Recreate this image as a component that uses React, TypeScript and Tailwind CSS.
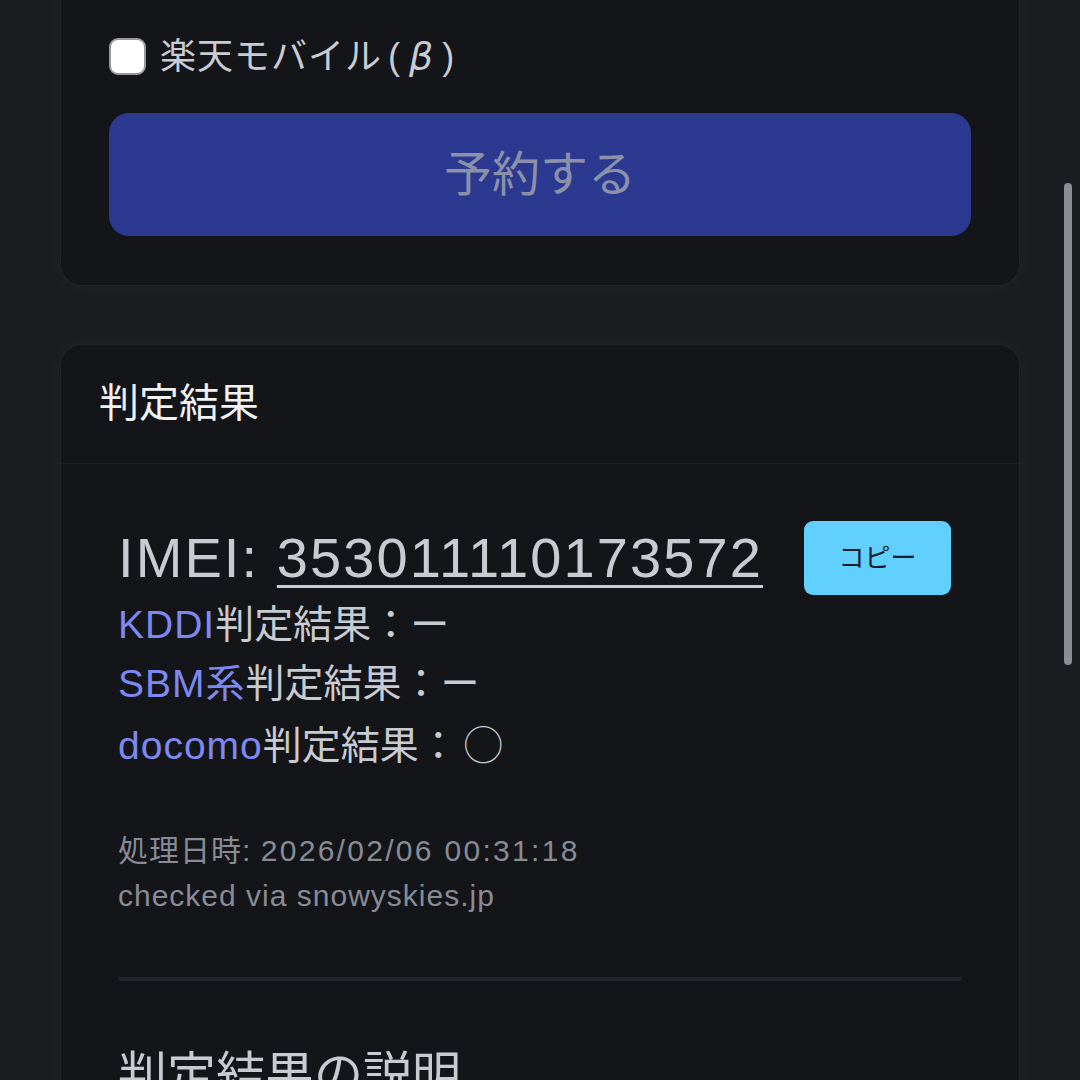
import React from "react";

const jp = { fontFamily: '"Liberation Sans", "Noto Sans CJK JP", sans-serif' };

export default function App() {
  return (
    <div className="relative w-[1080px] h-[1080px] overflow-hidden bg-[#1b1c20]" style={jp}>
      <div className="flex flex-col gap-[58px] px-[60px] -mt-[40px]">
        {/* Card 1 */}
        <div className="rounded-[22px] bg-[#141519] border border-[#222428] shadow-[0_0_24px_rgba(255,255,255,0.04)] px-[48px] pt-[76px] pb-[49px]">
          <label className="flex items-center gap-[14px] h-[38px]">
            <span className="w-[37px] h-[37px] rounded-[9px] bg-white border-2 border-[#9a9a9a] shrink-0" />
            <span className="text-[36px] leading-none text-[#c9ccd2] tracking-[1px]">
              楽天モバイル<span className="ml-[6px]">(</span>
              <span className="mx-[8px] text-[38px]" style={{ fontFamily: '"DejaVu Sans", sans-serif', fontStyle: "italic" }}>β</span>
              <span>)</span>
            </span>
          </label>
          <button className="mt-[38px] w-full h-[123px] rounded-[20px] bg-[#2b3a90] text-[48px] text-[#8c91a9] flex items-center justify-center">
            予約する
          </button>
        </div>

        {/* Card 2 */}
        <div className="rounded-[22px] bg-[#141519] border border-[#222428] shadow-[0_0_24px_rgba(255,255,255,0.04)] h-[800px]">
          <div className="h-[119px] px-[38px] flex items-center border-b border-[#1d1f23]">
            <h2 className="text-[40px] leading-none text-[#f2f2f4] pb-[2px]">判定結果</h2>
          </div>
          <div className="px-[57px] pt-[57px]">
            <div className="flex items-center h-[74px] gap-[41px]">
              <div className="text-[56px] leading-none text-[#c8cbd1] tracking-[2.1px]">
                IMEI: <span className="underline decoration-[3px] underline-offset-[8px]">353011110173572</span>
              </div>
              <button className="w-[147px] h-[74px] rounded-[9px] bg-[#62d0ff] text-[26px] text-[#15202c] flex items-center justify-center">
                コピー
              </button>
            </div>
            <div className="text-[39px] leading-[59px] text-[#c8cbd1]">
              <div><span className="text-[#7d89f0] tracking-[1px]">KDDI</span>判定結果：ー</div>
              <div><span className="text-[#7d89f0] tracking-[1px]">SBM系</span>判定結果：ー</div>
              <div><span className="text-[#7d89f0] tracking-[1px]">docomo</span>判定結果：<span className="ml-[6px]" style={{ fontFamily: '"Noto Sans CJK JP", sans-serif' }}>◯</span></div>
            </div>
            <div className="mt-[53px] text-[30px] leading-[45px] text-[#878c96] tracking-[1px]">
              <div>処理日時: <span className="tracking-[2.3px]">2026/02/06 00:31:18</span></div>
              <div>checked via snowyskies.jp</div>
            </div>
            <div className="mt-[59px] h-[4px] rounded-full bg-[#22252b] w-[844px]" />
            <h3 className="mt-[70px] text-[49px] leading-none text-[#c8cbd1]">判定結果の説明</h3>
          </div>
        </div>
      </div>

      {/* overlay scrollbar */}
      <div className="absolute left-[1064px] top-[183px] w-[8px] h-[482px] rounded-full bg-[#8a8e92]" />
    </div>
  );
}
